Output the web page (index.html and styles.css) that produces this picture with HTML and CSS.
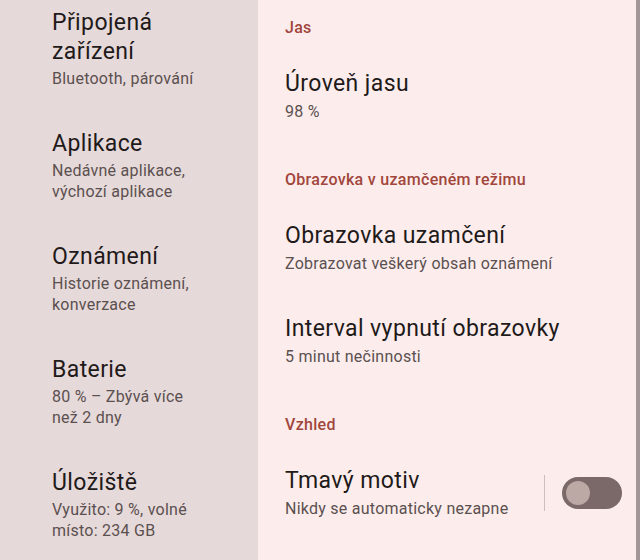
FILE: index.html
```html
<!DOCTYPE html>
<html lang="cs">
<head>
  <meta charset="UTF-8">
  <meta name="viewport" content="width=device-width, initial-scale=1.0">
  <title>Nastavení – Displej</title>
  <link rel="stylesheet" href="styles.css">
</head>
<body>
  <div class="settings">
    <nav class="nav">
      <div class="nav-item">
        <div class="nav-title">Připojená zařízení</div>
        <div class="nav-sub">Bluetooth, párování</div>
      </div>
      <div class="nav-item">
        <div class="nav-title">Aplikace</div>
        <div class="nav-sub">Nedávné aplikace, výchozí aplikace</div>
      </div>
      <div class="nav-item">
        <div class="nav-title">Oznámení</div>
        <div class="nav-sub">Historie oznámení, konverzace</div>
      </div>
      <div class="nav-item">
        <div class="nav-title">Baterie</div>
        <div class="nav-sub">80 % – Zbývá více než 2 dny</div>
      </div>
      <div class="nav-item">
        <div class="nav-title">Úložiště</div>
        <div class="nav-sub">Využito: 9 %, volné místo: 234 GB</div>
      </div>
    </nav>

    <main class="detail">
      <div class="group">Jas</div>
      <div class="pref">
        <div class="pref-text">
          <div class="pref-title">Úroveň jasu</div>
          <div class="pref-sub">98 %</div>
        </div>
      </div>

      <div class="group">Obrazovka v uzamčeném režimu</div>
      <div class="pref">
        <div class="pref-text">
          <div class="pref-title">Obrazovka uzamčení</div>
          <div class="pref-sub">Zobrazovat veškerý obsah oznámení</div>
        </div>
      </div>
      <div class="pref">
        <div class="pref-text">
          <div class="pref-title">Interval vypnutí obrazovky</div>
          <div class="pref-sub">5 minut nečinnosti</div>
        </div>
      </div>

      <div class="group">Vzhled</div>
      <div class="pref">
        <div class="pref-text">
          <div class="pref-title">Tmavý motiv</div>
          <div class="pref-sub">Nikdy se automaticky nezapne</div>
        </div>
        <div class="divider"></div>
        <div class="switch"><div class="knob"></div></div>
      </div>
      <div class="pref">
        <div class="pref-text">
          <div class="pref-title">Velikost zobrazení a textu</div>
          <div class="pref-sub">Výchozí</div>
        </div>
      </div>
    </main>
  </div>
</body>
</html>
```

FILE: styles.css
```css
html, body {
  margin: 0;
  height: 100%;
  overflow: hidden;
}
body {
  font-family: Roboto, "Noto Sans", sans-serif;
  background: #fcedec;
  color: #1f1a1a;
}
.settings {
  display: flex;
  height: 560px;
  overflow: hidden;
}

/* left column */
.nav {
  width: 258px;
  flex-shrink: 0;
  background: #e6d9d9;
  box-sizing: border-box;
  padding: 0 54px 0 52px;
}
.nav-item {
  padding: 20px 0;
}
.nav-item:first-child {
  padding-top: 8px;
}
.nav-title {
  font-size: 23px;
  line-height: 29px;
  letter-spacing: 0.4px;
}
.nav-sub {
  font-size: 16px;
  line-height: 21px;
  letter-spacing: 0.25px;
  margin-top: 2px;
  color: #5b5050;
}

/* right column */
.detail {
  flex: 1;
  padding-left: 27px;
  padding-right: 14px;
  border-right: 4px solid #a39696;
}
.group {
  font-size: 16px;
  line-height: 20px;
  font-weight: 500;
  letter-spacing: 0.3px;
  color: #a1463c;
  padding: 28px 0 11px;
}
.group:first-child {
  padding-top: 18px;
}
.pref {
  display: flex;
  align-items: center;
  padding: 20px 0;
}
.pref-text {
  flex: 1;
}
.pref-title {
  font-size: 23px;
  line-height: 30px;
  letter-spacing: 0.4px;
}
.pref-sub {
  font-size: 16px;
  line-height: 20px;
  letter-spacing: 0.25px;
  margin-top: 3px;
  color: #5b5050;
}
.divider {
  width: 1px;
  height: 36px;
  background: #cdbdbc;
  margin: 0 17px 0 12px;
}
.switch {
  width: 60px;
  height: 32px;
  border-radius: 16px;
  background: #7a6968;
  display: flex;
  align-items: center;
  padding-left: 4px;
  box-sizing: border-box;
}
.knob {
  width: 24px;
  height: 24px;
  border-radius: 50%;
  background: #bca8a4;
}
```
